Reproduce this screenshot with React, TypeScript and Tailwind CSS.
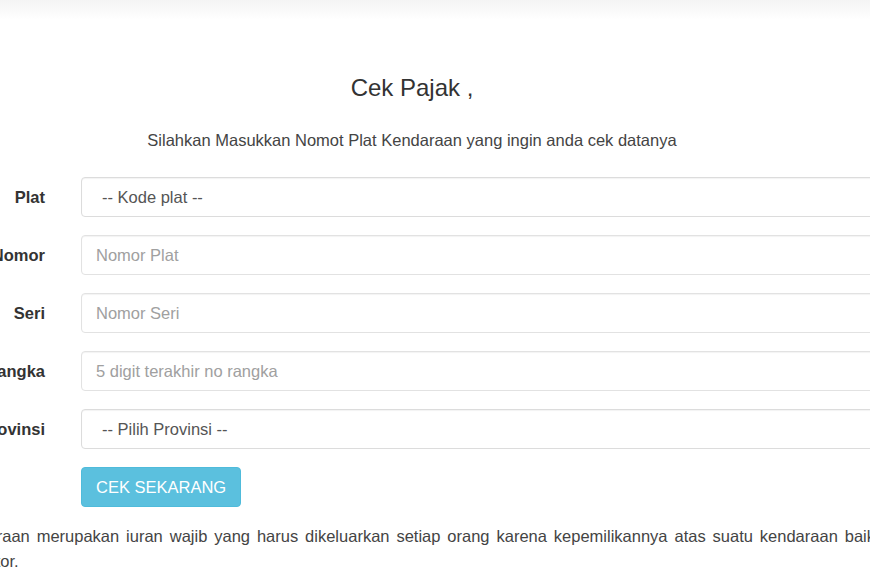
import React from "react";

const rows = [
  { label: "Plat", kind: "select", text: "-- Kode plat --" },
  { label: "Nomor", kind: "input", text: "Nomor Plat" },
  { label: "Seri", kind: "input", text: "Nomor Seri" },
  { label: "Rangka", kind: "input", text: "5 digit terakhir no rangka" },
  { label: "Provinsi", kind: "select", text: "-- Pilih Provinsi --" },
];

export default function App() {
  return (
    <div
      className="w-full h-[580px] overflow-hidden bg-white text-[#333]"
      style={{ fontFamily: '"Liberation Sans", Arial, sans-serif' }}
    >
      <div className="h-[20px] bg-gradient-to-b from-[#f4f4f4] to-white" />

      <div className="w-[824px] text-center">
        <h3 className="mt-[55px] text-[24px] leading-[26px] text-[#333]">Cek Pajak ,</h3>
        <p className="mt-[27px] text-[16.5px] leading-[24px] text-[#444]">
          Silahkan Masukkan Nomot Plat Kendaraan yang ingin anda cek datanya
        </p>
      </div>

      <form className="mt-[25px] -ml-[55px] w-[1000px] flex flex-col gap-[18px]">
        {rows.map((r) => (
          <div key={r.label} className="flex items-center gap-[36px]">
            <label className="w-[100px] text-right font-bold text-[16.5px] text-[#333] whitespace-nowrap">
              {r.label}
            </label>
            {r.kind === "select" ? (
              <div className="flex-1 h-[40px] flex items-center pl-[20px] border border-[#dcdcdc] rounded-[4px] bg-white text-[16.5px] text-[#555] shadow-[inset_0_1px_1px_rgba(0,0,0,0.05)]">
                {r.text}
              </div>
            ) : (
              <input
                placeholder={r.text}
                className="flex-1 h-[40px] px-[14px] border border-[#e2e2e2] rounded-[4px] bg-white text-[16.5px] placeholder:text-[#a0a0a0] shadow-[inset_0_1px_1px_rgba(0,0,0,0.05)] outline-none"
              />
            )}
          </div>
        ))}
        <div className="flex gap-[36px]">
          <div className="w-[100px]" />
          <button
            type="button"
            className="h-[40px] px-[14px] rounded-[4px] bg-[#5bc0de] border border-[#4fbbdb] text-white text-[16.5px]"
          >
            CEK SEKARANG
          </button>
        </div>
      </form>

      <div className="mt-[17px] -ml-[51px] text-[16.5px] leading-[25px] text-[#444]">
        <p className="w-[926px] text-justify [text-align-last:justify]">
          Kendaraan merupakan iuran wajib yang harus dikeluarkan setiap orang karena kepemilikannya atas suatu kendaraan baik
        </p>
        <p>bermotor.</p>
      </div>
    </div>
  );
}
